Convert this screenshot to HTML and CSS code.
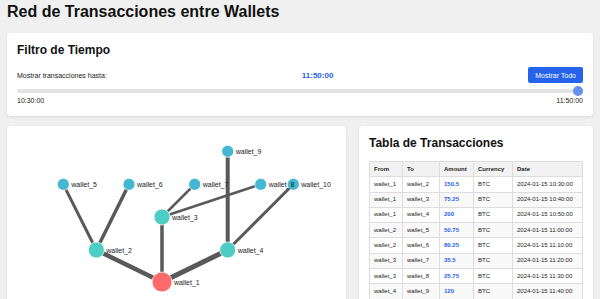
FILE: index.html
```html
<!DOCTYPE html>
<html lang="es">
<head>
<meta charset="utf-8">
<title>Red de Transacciones entre Wallets</title>
<link rel="stylesheet" href="styles.css">
</head>
<body>
<div class="page">
  <h1 class="title">Red de Transacciones entre Wallets</h1>

  <section class="card filter">
    <h2 class="card-title">Filtro de Tiempo</h2>
    <div class="filter-row">
      <label class="filter-label" for="time">Mostrar transacciones hasta:</label>
      <span class="filter-value">11:50:00</span>
      <button class="btn" type="button">Mostrar Todo</button>
    </div>
    <input class="slider" id="time" type="range" min="0" max="80" value="80">
    <div class="range-labels"><span>10:30:00</span><span>11:50:00</span></div>
  </section>

  <div class="grid">
    <section class="card graph">
      <svg class="graph-svg" width="319" height="190" viewBox="0 0 319 190">
        <g class="edges" stroke="#595959" stroke-linecap="butt">
          <line x1="145" y1="146" x2="79.3" y2="114" stroke-width="4.5"/>
          <line x1="145" y1="146" x2="145" y2="81" stroke-width="3.5"/>
          <line x1="145" y1="146" x2="210.7" y2="114" stroke-width="5"/>
          <line x1="79.3" y1="114" x2="46.3" y2="48.3" stroke-width="3"/>
          <line x1="79.3" y1="114" x2="112" y2="48.3" stroke-width="3.5"/>
          <line x1="145" y1="81" x2="177.7" y2="48.3" stroke-width="2.5"/>
          <line x1="145" y1="81" x2="243.7" y2="48.3" stroke-width="2.5"/>
          <line x1="210.7" y1="114" x2="210.7" y2="15.3" stroke-width="4"/>
          <line x1="210.7" y1="114" x2="276.3" y2="48.3" stroke-width="3"/>
        </g>
        <g class="nodes" stroke="#ffffff" stroke-width="0.75">
          <circle cx="145" cy="146" r="10" fill="#ff6b6b"/>
          <circle cx="79.3" cy="114" r="8" fill="#4ecdc4"/>
          <circle cx="145" cy="81" r="8" fill="#4ecdc4"/>
          <circle cx="210.7" cy="114" r="8" fill="#4ecdc4"/>
          <circle cx="46.3" cy="48.3" r="6" fill="#45b7d1"/>
          <circle cx="112" cy="48.3" r="6" fill="#45b7d1"/>
          <circle cx="177.7" cy="48.3" r="6" fill="#45b7d1"/>
          <circle cx="243.7" cy="48.3" r="6" fill="#45b7d1"/>
          <circle cx="210.7" cy="15.3" r="6" fill="#45b7d1"/>
          <circle cx="276.3" cy="48.3" r="6" fill="#45b7d1"/>
        </g>
        <g class="labels">
          <text x="157" y="148.6">wallet_1</text>
          <text x="89.3" y="116.6">wallet_2</text>
          <text x="155" y="83.6">wallet_3</text>
          <text x="220.7" y="116.6">wallet_4</text>
          <text x="54.3" y="50.9">wallet_5</text>
          <text x="120" y="50.9">wallet_6</text>
          <text x="185.7" y="50.9">wallet_7</text>
          <text x="251.7" y="50.9">wallet_8</text>
          <text x="218.7" y="17.9">wallet_9</text>
          <text x="284.3" y="50.9">wallet_10</text>
        </g>
      </svg>
    </section>

    <section class="card table-card">
      <h2 class="card-title table-title">Tabla de Transacciones</h2>
      <table class="tx">
        <thead>
          <tr><th class="c-from">From</th><th class="c-to">To</th><th class="c-amount">Amount</th><th class="c-cur">Currency</th><th class="c-date">Date</th></tr>
        </thead>
        <tbody>
          <tr><td>wallet_1</td><td>wallet_2</td><td class="amount">150.5</td><td>BTC</td><td>2024-01-15 10:30:00</td></tr>
          <tr><td>wallet_1</td><td>wallet_3</td><td class="amount">75.25</td><td>BTC</td><td>2024-01-15 10:40:00</td></tr>
          <tr><td>wallet_1</td><td>wallet_4</td><td class="amount">200</td><td>BTC</td><td>2024-01-15 10:50:00</td></tr>
          <tr><td>wallet_2</td><td>wallet_5</td><td class="amount">50.75</td><td>BTC</td><td>2024-01-15 11:00:00</td></tr>
          <tr><td>wallet_2</td><td>wallet_6</td><td class="amount">80.25</td><td>BTC</td><td>2024-01-15 11:10:00</td></tr>
          <tr><td>wallet_3</td><td>wallet_7</td><td class="amount">35.5</td><td>BTC</td><td>2024-01-15 11:20:00</td></tr>
          <tr><td>wallet_3</td><td>wallet_8</td><td class="amount">25.75</td><td>BTC</td><td>2024-01-15 11:30:00</td></tr>
          <tr><td>wallet_4</td><td>wallet_9</td><td class="amount">120</td><td>BTC</td><td>2024-01-15 11:40:00</td></tr>
          <tr><td>wallet_4</td><td>wallet_10</td><td class="amount">90</td><td>BTC</td><td>2024-01-15 11:50:00</td></tr>
        </tbody>
      </table>
    </section>
  </div>
</div>
</body>
</html>
```

FILE: styles.css
```css
html, body {
  margin: 0;
  background: #f0f0f0;
  font-family: "Liberation Sans", Arial, sans-serif;
  color: #333;
}

.page {
  padding: 2px 7px 0;
}

.title {
  margin: 0 0 11px;
  font-size: 16px;
  line-height: 20px;
  font-weight: bold;
  color: #111;
}

.card {
  background: #fff;
  border-radius: 4px;
  box-shadow: 0 1px 3px rgba(0, 0, 0, 0.1);
  padding: 10px;
}

.filter {
  padding-bottom: 12px;
}

.card-title {
  margin: 0 0 10px;
  font-size: 12px;
  line-height: normal;
  font-weight: bold;
  color: #111;
}

.filter-row {
  display: flex;
  justify-content: space-between;
  align-items: center;
  height: 16px;
}

.filter-label {
  font-size: 7px;
  color: #1a1a1a;
}

.filter-value {
  font-size: 8px;
  font-weight: bold;
  color: #2563eb;
}

.btn {
  font-family: "Liberation Sans", Arial, sans-serif;
  font-size: 7px;
  color: #fff;
  background: #2563eb;
  border: 0;
  border-radius: 2px;
  padding: 0 7px;
  height: 15.5px;
  cursor: pointer;
}

.slider {
  -webkit-appearance: none;
  appearance: none;
  display: block;
  width: 100%;
  height: 10px;
  margin: 3px 0 0;
  padding: 0;
  background: transparent;
}

.slider::-webkit-slider-runnable-track {
  height: 4px;
  background: #e3e3e3;
  border-radius: 2px;
}

.slider::-webkit-slider-thumb {
  -webkit-appearance: none;
  appearance: none;
  width: 10px;
  height: 10px;
  border-radius: 50%;
  background: #6690f0;
  margin-top: -3px;
  border: 0;
}

.range-labels {
  display: flex;
  justify-content: space-between;
  font-size: 7px;
  color: #1a1a1a;
  margin-top: 1px;
}

.grid {
  display: grid;
  grid-template-columns: 339px 1fr;
  gap: 13px;
  margin-top: 10px;
}

.graph {
  min-height: 200px;
}

.graph-svg {
  display: block;
}

.labels text {
  font-family: "Liberation Sans", Arial, sans-serif;
  font-size: 7px;
  fill: #222;
}

.table-title {
  margin-bottom: 11px;
}

.tx {
  width: 100%;
  border-collapse: collapse;
  table-layout: fixed;
  font-size: 6px;
  color: #222;
}

.tx th,
.tx td {
  border: 1px solid #ddd;
  padding: 3.5px 4px;
  text-align: left;
  line-height: 7.3px;
  white-space: nowrap;
  overflow: hidden;
}

.tx th {
  background: #f2f2f2;
  font-weight: bold;
}

.tx tbody tr:nth-child(even) td {
  background: #f9f9f9;
}

.c-from { width: 33px; box-sizing: border-box; }
.c-to { width: 37px; box-sizing: border-box; }
.c-amount { width: 34px; box-sizing: border-box; }
.c-cur { width: 39px; box-sizing: border-box; }
.c-date { box-sizing: border-box; }

.amount {
  color: #2563eb;
  font-weight: bold;
}
```
